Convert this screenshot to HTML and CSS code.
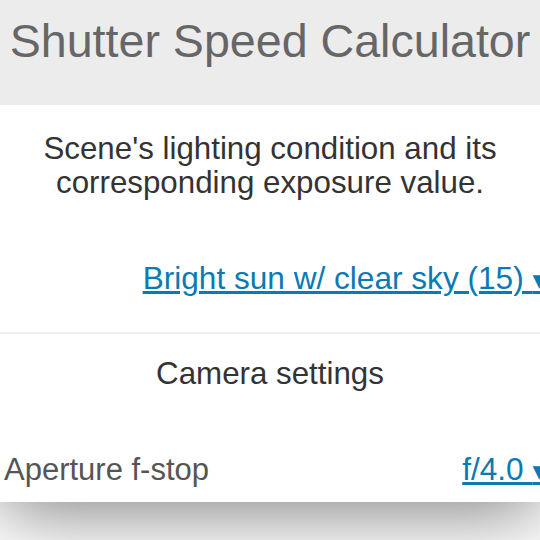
FILE: index.html
```html
<!DOCTYPE html>
<html>
<head>
<meta charset="utf-8">
<link rel="stylesheet" href="styles.css">
<title>Shutter Speed Calculator</title>
</head>
<body>
<div class="card">
  <header class="header">
    <h1 class="title">Shutter Speed Calculator</h1>
  </header>
  <section class="section">
    <p class="desc">Scene's lighting condition and its corresponding exposure value.</p>
    <div class="select-row">
      <span class="select">Bright sun w/ clear sky (15) <span class="arrow">▾</span></span>
    </div>
  </section>
  <div class="divider"></div>
  <section class="section2">
    <p class="subtitle">Camera settings</p>
    <div class="field-row">
      <span class="label">Aperture f-stop</span>
      <span class="select">f/4.0 <span class="arrow">▾</span></span>
    </div>
  </section>
</div>
</body>
</html>
```

FILE: styles.css
```css
html, body {
  margin: 0;
  padding: 0;
  background: #fff;
  overflow: hidden;
}
body {
  width: 540px;
  height: 540px;
  font-family: "Liberation Sans", Arial, sans-serif;
}
.card {
  background: #fff;
  box-shadow: 0 10px 70px rgba(0, 0, 0, 0.5);
}
.header {
  background: #ececec;
  height: 105px;
  box-sizing: border-box;
  padding-top: 14px;
}
.title {
  margin: 0;
  font-weight: normal;
  font-size: 46.6px;
  line-height: 54px;
  color: #666;
  text-align: center;
  white-space: nowrap;
}
.section {
  padding-top: 27px;
  padding-bottom: 35px;
}
.desc {
  margin: 0;
  font-size: 31.3px;
  line-height: 34px;
  color: #333;
  text-align: center;
  padding: 0 30px;
}
.select-row {
  margin-top: 61px;
  display: flex;
  justify-content: flex-end;
  font-size: 31.6px;
  line-height: 34px;
  white-space: nowrap;
}
.select {
  color: #0a7ab4;
  text-decoration: underline;
  margin-right: -6px;
  font-size: 31.6px;
  line-height: 34px;
  white-space: nowrap;
}
.arrow {
  font-family: "DejaVu Sans", sans-serif;
  font-size: 27px;
}
.divider {
  height: 2px;
  background: #eeeeee;
}
.section2 {
  padding-top: 23px;
  padding-bottom: 14px;
}
.subtitle {
  margin: 0;
  font-size: 31.3px;
  line-height: 34px;
  color: #333;
  text-align: center;
}
.field-row {
  margin-top: 61px;
  display: flex;
  justify-content: space-between;
  align-items: baseline;
  padding-left: 4px;
  white-space: nowrap;
}
.label {
  font-size: 31px;
  line-height: 34px;
  color: #555;
}
```
